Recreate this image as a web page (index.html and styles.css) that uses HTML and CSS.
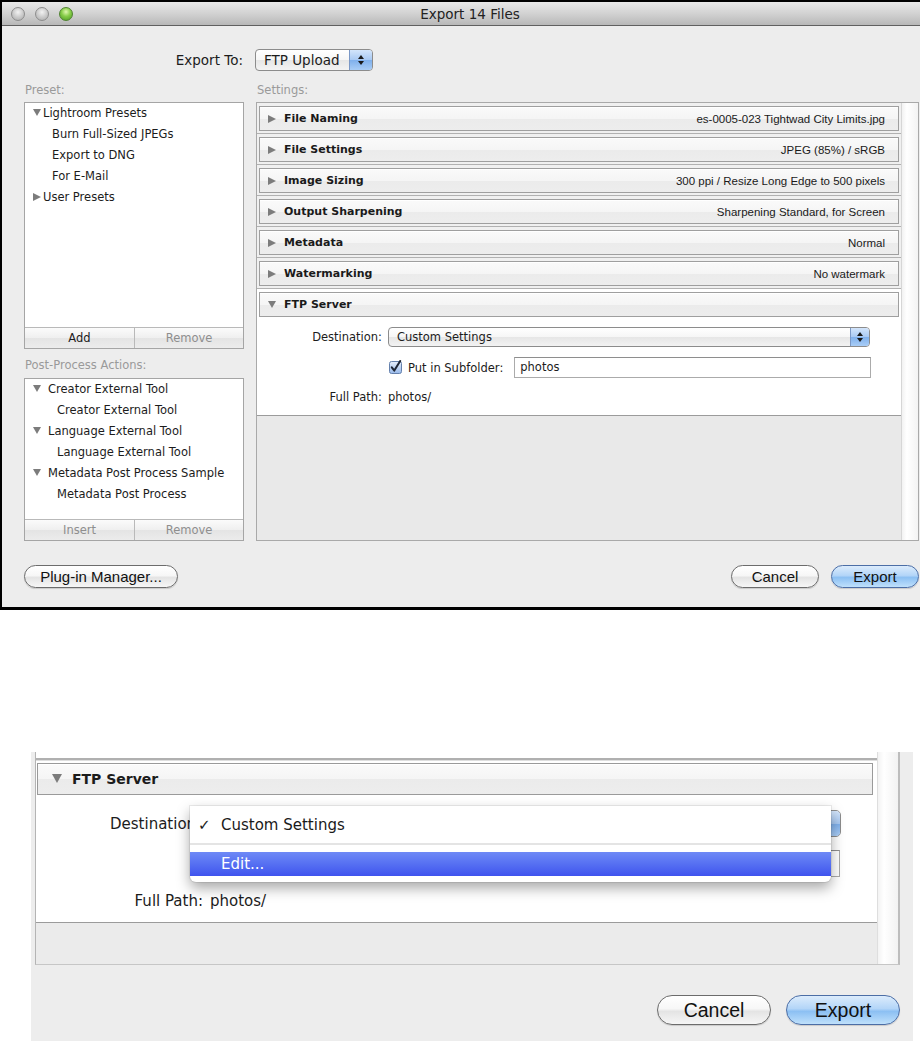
FILE: index.html
```html
<!DOCTYPE html>
<html lang="en">
<head>
    <meta charset="UTF-8">
    <meta name="viewport" content="width=device-width, initial-scale=1.0">
    <title>Export 14 Files</title>
    <link rel="stylesheet" href="styles.css">
</head>
<body>
<div class="page">
    <!-- Full dialog -->
    <div class="window">
        <div class="titlebar">
            <div class="lights">
                <span class="light"></span>
                <span class="light"></span>
                <span class="light green"></span>
            </div>
            <div class="title">Export 14 Files</div>
            <div></div>
        </div>

        <div class="window-body">
            <div class="export-row">
                <div class="export-label">Export To:</div>
                <div class="popup export-popup"><span class="popup-text">FTP Upload</span><span class="stepper"></span></div>
            </div>

            <div class="columns">
                <div class="left-col">
                    <div class="group-label">Preset:</div>
                    <div class="list-box preset-box">
                        <ul class="tree">
                            <li class="node"><span class="tri down"></span>Lightroom Presets</li>
                            <li class="leaf">Burn Full-Sized JPEGs</li>
                            <li class="leaf">Export to DNG</li>
                            <li class="leaf">For E-Mail</li>
                            <li class="node"><span class="tri right"></span>User Presets</li>
                        </ul>
                        <div class="list-buttons">
                            <button class="list-btn">Add</button>
                            <button class="list-btn disabled">Remove</button>
                        </div>
                    </div>

                    <div class="group-label post-label">Post-Process Actions:</div>
                    <div class="list-box post-box">
                        <ul class="tree post">
                            <li class="node"><span class="tri down"></span>Creator External Tool</li>
                            <li class="leaf">Creator External Tool</li>
                            <li class="node"><span class="tri down"></span>Language External Tool</li>
                            <li class="leaf">Language External Tool</li>
                            <li class="node"><span class="tri down"></span>Metadata Post Process Sample</li>
                            <li class="leaf">Metadata Post Process</li>
                        </ul>
                        <div class="list-buttons">
                            <button class="list-btn disabled">Insert</button>
                            <button class="list-btn disabled">Remove</button>
                        </div>
                    </div>
                </div>

                <div class="right-col">
                    <div class="group-label">Settings:</div>
                    <div class="settings-panel">
                        <div class="settings-scroll">
                            <div class="section">
                                <div class="section-head"><span class="tri right"></span><span class="head-title">File Naming</span><span class="head-value">es-0005-023 Tightwad City Limits.jpg</span></div>
                            </div>
                            <div class="section">
                                <div class="section-head"><span class="tri right"></span><span class="head-title">File Settings</span><span class="head-value">JPEG (85%) / sRGB</span></div>
                            </div>
                            <div class="section">
                                <div class="section-head"><span class="tri right"></span><span class="head-title">Image Sizing</span><span class="head-value">300 ppi / Resize Long Edge to 500 pixels</span></div>
                            </div>
                            <div class="section">
                                <div class="section-head"><span class="tri right"></span><span class="head-title">Output Sharpening</span><span class="head-value">Sharpening Standard, for Screen</span></div>
                            </div>
                            <div class="section">
                                <div class="section-head"><span class="tri right"></span><span class="head-title">Metadata</span><span class="head-value">Normal</span></div>
                            </div>
                            <div class="section">
                                <div class="section-head"><span class="tri right"></span><span class="head-title">Watermarking</span><span class="head-value">No watermark</span></div>
                            </div>
                            <div class="section open">
                                <div class="section-head"><span class="tri down"></span><span class="head-title">FTP Server</span></div>
                                <div class="ftp-form">
                                    <div class="form-label">Destination:</div>
                                    <div class="popup dest-popup"><span class="popup-text">Custom Settings</span><span class="stepper"></span></div>

                                    <div></div>
                                    <div class="subfolder">
                                        <svg class="checkbox" width="13" height="14" viewBox="0 0 13 14">
                                            <defs>
                                                <linearGradient id="cbFill" x1="0" y1="0" x2="0" y2="1">
                                                    <stop offset="0" stop-color="#e6effb"/>
                                                    <stop offset="1" stop-color="#98b9ea"/>
                                                </linearGradient>
                                            </defs>
                                            <rect x="0.5" y="1.5" width="12" height="12" rx="2" fill="url(#cbFill)" stroke="#6581ad"/>
                                            <path d="M2.8 7.4 L5.3 10.6 L11.2 1" fill="none" stroke="#1d2534" stroke-width="2" stroke-linecap="round" stroke-linejoin="round"/>
                                        </svg>
                                        <span class="subfolder-label">Put in Subfolder:</span>
                                        <div class="text-field">photos</div>
                                    </div>

                                    <div class="form-label">Full Path:</div>
                                    <div class="form-value">photos/</div>
                                </div>
                            </div>
                            <div class="settings-empty"></div>
                        </div>
                        <div class="scroll-track"></div>
                    </div>
                </div>
            </div>

            <div class="footer">
                <button class="pill plugin-btn">Plug-in Manager...</button>
                <div class="footer-right">
                    <button class="pill cancel-btn">Cancel</button>
                    <button class="pill default export-btn">Export</button>
                </div>
            </div>
        </div>
    </div>

    <!-- Close-up of the destination menu -->
    <div class="zoom">
        <div class="zpanel">
            <div class="zcontent">
                <div class="zsep"></div>
                <div class="zsection">
                    <div class="zhead"><span class="tri down big"></span><span class="zhead-title">FTP Server</span></div>
                </div>
                <div class="zform">
                    <div class="zclip"><span>Destination:</span></div>
                    <div class="popup zpopup"><span class="popup-text"></span><span class="stepper"></span></div>

                    <div></div>
                    <div class="zsubfolder">
                        <div class="text-field ztext-field"></div>
                    </div>

                    <div class="zlabel">Full Path:</div>
                    <div class="zvalue">photos/</div>
                </div>
                <div class="zempty"></div>
            </div>
            <div class="ztrack"></div>
        </div>

        <div class="zfooter">
            <button class="pill zpill">Cancel</button>
            <button class="pill default zpill">Export</button>
        </div>

        <div class="menu">
            <div class="menu-item"><span class="menu-check">✓</span>Custom Settings</div>
            <div class="menu-sep"></div>
            <div class="menu-item selected">Edit...</div>
        </div>
    </div>
</div>
</body>
</html>
```

FILE: styles.css
```css
/* Reset */
* {
    margin: 0;
    padding: 0;
    box-sizing: border-box;
}

html, body {
    background: #ffffff;
    overflow: hidden;
}

body {
    font-family: 'DejaVu Sans', Verdana, sans-serif;
    color: #1c1c1c;
}

.page {
    width: 920px;
    height: 1041px;
    overflow: hidden;
}

button {
    font: inherit;
    color: inherit;
}

ul {
    list-style: none;
}

/* Window frame */
.window {
    width: 938px;
    border-top: 2px solid #000;
    border-left: 2px solid #000;
    border-bottom: 3px solid #000;
    background: #ededed;
}

.titlebar {
    height: 24px;
    display: grid;
    grid-template-columns: 1fr auto 1fr;
    align-items: center;
    background: linear-gradient(#e8e8e8, #d2d2d2 50%, #b8b8b8);
    border-bottom: 1px solid #606060;
}

.lights {
    display: flex;
    gap: 10px;
    padding-left: 9px;
}

.light {
    width: 14px;
    height: 14px;
    border-radius: 50%;
    border: 1px solid #8d8d8d;
    background: radial-gradient(circle at 50% 35%, #f2f2f2, #cfcfcf 45%, #a9a9a9 100%);
}

.light.green {
    border-color: #4f8230;
    background: radial-gradient(circle at 50% 32%, #e0f8b0, #86cc48 45%, #4c9a22 100%);
}

.title {
    font-size: 13.5px;
    color: #222;
}

.window-body {
    height: 581px;
    padding: 23px 19px 19px 22px;
}

/* Export To row */
.export-row {
    display: grid;
    grid-template-columns: 220px 1fr;
    column-gap: 12px;
    align-items: center;
    height: 22px;
}

.export-label {
    font-size: 13.5px;
    text-align: right;
    padding-right: 1px;
}

.popup {
    display: flex;
    align-items: center;
    border: 1px solid #8c8c8c;
    border-radius: 4px;
    background: linear-gradient(#ffffff, #f6f6f6 50%, #e6e6e6 51%, #f3f3f3);
    overflow: hidden;
}

.popup-text {
    flex: 1;
    white-space: nowrap;
}

.stepper {
    align-self: stretch;
    display: flex;
    flex-direction: column;
    align-items: center;
    justify-content: center;
    gap: 2px;
    border-left: 1px solid #7b98c6;
    background: linear-gradient(#d3e5fb, #a8c9f3 50%, #7fb0ec 51%, #a9cdf6);
}

.stepper::before,
.stepper::after {
    content: '';
    border-left: 3px solid transparent;
    border-right: 3px solid transparent;
}

.stepper::before {
    border-bottom: 4px solid #1a1a1a;
}

.stepper::after {
    border-top: 4px solid #1a1a1a;
}

.export-popup {
    width: 118px;
    height: 22px;
    margin-left: -1px;
    font-size: 13.5px;
}

.export-popup .popup-text {
    padding-left: 8px;
}

.export-popup .stepper {
    width: 23px;
}

/* Two columns */
.columns {
    display: grid;
    grid-template-columns: 220px 1fr;
    column-gap: 12px;
    margin-top: 12px;
}

.group-label {
    height: 14px;
    line-height: 14px;
    font-size: 11.5px;
    color: #9a9a9a;
    padding-left: 1px;
    margin-bottom: 5px;
}

.post-label {
    margin-top: 9px;
    margin-bottom: 6px;
}

.list-box {
    display: flex;
    flex-direction: column;
    border: 1px solid #a5a5a5;
    background: #fff;
}

.preset-box {
    height: 247px;
}

.post-box {
    height: 163px;
}

.tree {
    flex: 1;
    font-size: 11.5px;
}

.tree li {
    height: 21px;
    line-height: 21px;
    white-space: nowrap;
}

.tree .node {
    padding-left: 8px;
}

.tree .node .tri {
    margin-right: 2px;
}

.tree .leaf {
    padding-left: 27px;
}

.tree.post .node .tri {
    margin-right: 7px;
}

.tree.post .leaf {
    padding-left: 32px;
}

/* Disclosure triangles */
.tri {
    display: inline-block;
    width: 0;
    height: 0;
    vertical-align: middle;
}

.tri.down {
    border-left: 4px solid transparent;
    border-right: 4px solid transparent;
    border-top: 7px solid #7c7c7c;
    margin-top: -2px;
}

.tri.right {
    border-top: 4.5px solid transparent;
    border-bottom: 4.5px solid transparent;
    border-left: 8px solid #7c7c7c;
    margin-top: -2px;
}

.list-buttons {
    height: 21px;
    display: grid;
    grid-template-columns: 110px 1fr;
    border-top: 1px solid #b9b9b9;
}

.list-btn {
    border: none;
    font-size: 11.5px;
    background: linear-gradient(#fbfbfb, #efefef 50%, #e4e4e4 51%, #ececec);
}

.list-btn:first-child {
    border-right: 1px solid #b9b9b9;
}

.list-btn.disabled {
    color: #8e8e8e;
}

/* Settings panel */
.settings-panel {
    height: 439px;
    display: flex;
    border: 1px solid #a9a9a9;
}

.settings-scroll {
    flex: 1;
    display: flex;
    flex-direction: column;
}

.section {
    padding: 3px 2px 2px;
    border-bottom: 1px solid #b1b1b1;
    background: #f0f0f0;
}

.section-head {
    height: 25px;
    display: flex;
    align-items: center;
    padding: 0 13px 0 8px;
    border: 1px solid #9f9f9f;
    background: linear-gradient(#fafafa, #f5f5f5 50%, #ebebeb 51%, #ededed);
    box-shadow: inset 0 1px 0 #ffffff;
}

.section-head .tri {
    margin: 0 8px 0 0;
}

.head-title {
    font-size: 11px;
    font-weight: bold;
    color: #1a1a1a;
}

.head-value {
    margin-left: auto;
    font-family: 'Liberation Sans', Arial, sans-serif;
    font-size: 11.5px;
    color: #1a1a1a;
    white-space: nowrap;
}

.section.open {
    background: #ffffff;
    padding-bottom: 0;
    border-bottom-color: #9b9b9b;
}

.ftp-form {
    display: grid;
    grid-template-columns: 123px 483px;
    grid-template-rows: 20px 21px 18px;
    column-gap: 6px;
    row-gap: 10px;
    padding: 10px 0 9px;
    align-items: center;
    font-size: 11.5px;
}

.form-label {
    text-align: right;
}

.dest-popup {
    width: 482px;
    height: 20px;
}

.dest-popup .popup-text {
    padding-left: 8px;
}

.dest-popup .stepper {
    width: 19px;
}

.subfolder {
    display: flex;
    align-items: center;
    height: 21px;
}

.subfolder-label {
    white-space: nowrap;
}

.checkbox {
    flex-shrink: 0;
    margin: -2px 6px 0 1px;
}

.text-field {
    height: 21px;
    line-height: 19px;
    border: 1px solid #ababab;
    border-top-color: #8e8e8e;
    background: #fff;
    padding-left: 5px;
}

.subfolder .text-field {
    flex: 1;
    margin-left: 11px;
}

.settings-empty {
    flex: 1;
    background: #e9e9e9;
}

.scroll-track {
    width: 17px;
    border-left: 1px solid #d6d6d6;
    background: linear-gradient(to right, #f2f2f2, #ffffff 30%, #f3f3f3);
}

/* Footer buttons */
.footer {
    margin-top: 24px;
    display: flex;
    justify-content: space-between;
    height: 23px;
}

.footer-right {
    display: flex;
    gap: 12px;
}

.pill {
    height: 23px;
    border: 1px solid #6c6c6c;
    border-radius: 12px;
    font-family: 'Liberation Sans', Arial, sans-serif;
    font-size: 15px;
    color: #111;
    background: linear-gradient(#ffffff, #f7f7f7 45%, #e4e4e4 55%, #f6f6f6);
    box-shadow: 0 1px 1px rgba(0, 0, 0, 0.15);
}

.pill.default {
    border-color: #4c6ea6;
    background: linear-gradient(#dcecfc, #b3d5f8 45%, #8cc0f3 55%, #bfe0fb);
}

.plugin-btn {
    width: 154px;
}

.cancel-btn,
.export-btn {
    width: 88px;
}

/* Close-up */
.zoom {
    position: relative;
    margin: 142px 0 0 31px;
    width: 882px;
    height: 289px;
    background: #ededed;
}

.zpanel {
    margin-left: 4px;
    width: 865px;
    height: 213px;
    display: flex;
    border-left: 1px solid #b4b4b4;
    border-right: 2px solid #bdbdbd;
    border-bottom: 1px solid #c6c6c6;
    background: #fff;
}

.zcontent {
    flex: 1;
    display: flex;
    flex-direction: column;
}

.zsep {
    margin-top: 6px;
    height: 3px;
    border-top: 2px solid #b0b0b0;
    border-bottom: 1px solid #dedede;
}

.zsection {
    padding: 2px 4px 0 1px;
}

.zhead {
    height: 32px;
    display: flex;
    align-items: center;
    padding-left: 14px;
    border: 1px solid #9a9a9a;
    background: linear-gradient(#fafafa, #f5f5f5 50%, #ebebeb 51%, #ededed);
    box-shadow: inset 0 1px 0 #ffffff;
}

.tri.down.big {
    border-left-width: 5px;
    border-right-width: 5px;
    border-top-width: 9px;
    margin-right: 10px;
}

.zhead-title {
    font-size: 14px;
    font-weight: bold;
}

.zform {
    display: grid;
    grid-template-columns: 167px 629px;
    grid-template-rows: 27px 27px 22px;
    column-gap: 9px;
    row-gap: 13px;
    padding: 15px 0 10px;
    align-items: center;
    font-size: 15px;
}

.zform .zvalue {
    margin-left: -2px;
}

.zlabel {
    text-align: right;
    white-space: nowrap;
}

/* label partly hidden by the open menu */
.zclip {
    width: 154px;
    overflow: hidden;
    white-space: nowrap;
    padding-left: 74px;
}

.zpopup {
    height: 27px;
    border-radius: 5px;
}

.zpopup .popup-text {
    padding-left: 10px;
}

.zpopup .stepper {
    width: 27px;
}

.zsubfolder {
    display: flex;
    align-items: center;
    height: 27px;
}

.ztext-field {
    width: 462px;
    height: 27px;
    margin-left: auto;
    margin-right: 1px;
}

.zempty {
    flex: 1;
    border-top: 1px solid #9b9b9b;
    background: #ebebeb;
}

.ztrack {
    width: 21px;
    border-left: 1px solid #dedede;
    background: linear-gradient(to right, #f3f3f3, #ffffff 30%, #f2f2f2);
}

.zfooter {
    margin-top: 30px;
    padding-right: 13px;
    display: flex;
    justify-content: flex-end;
    gap: 15px;
}

.zpill {
    width: 114px;
    height: 30px;
    border-radius: 15px;
    font-size: 19.5px;
}

/* Pop-up menu */
.menu {
    position: absolute;
    left: 159px;
    top: 54px;
    width: 641px;
    height: 76px;
    background: #ffffff;
    border-radius: 0 0 6px 6px;
    box-shadow: 0 6px 14px rgba(0, 0, 0, 0.35), 0 0 0 1px rgba(0, 0, 0, 0.07);
    font-size: 15px;
    z-index: 2;
}

.menu-item {
    height: 37px;
    display: flex;
    align-items: center;
    padding-left: 8px;
    color: #1a1a1a;
}

.menu-check {
    width: 23px;
}

.menu-sep {
    height: 2px;
    margin-bottom: 7px;
    background: #e4e4e4;
}

.menu-item.selected {
    height: 24px;
    padding-left: 31px;
    color: #ffffff;
    background: linear-gradient(#6e89f6, #5670f2 50%, #3f53ee);
}
```
